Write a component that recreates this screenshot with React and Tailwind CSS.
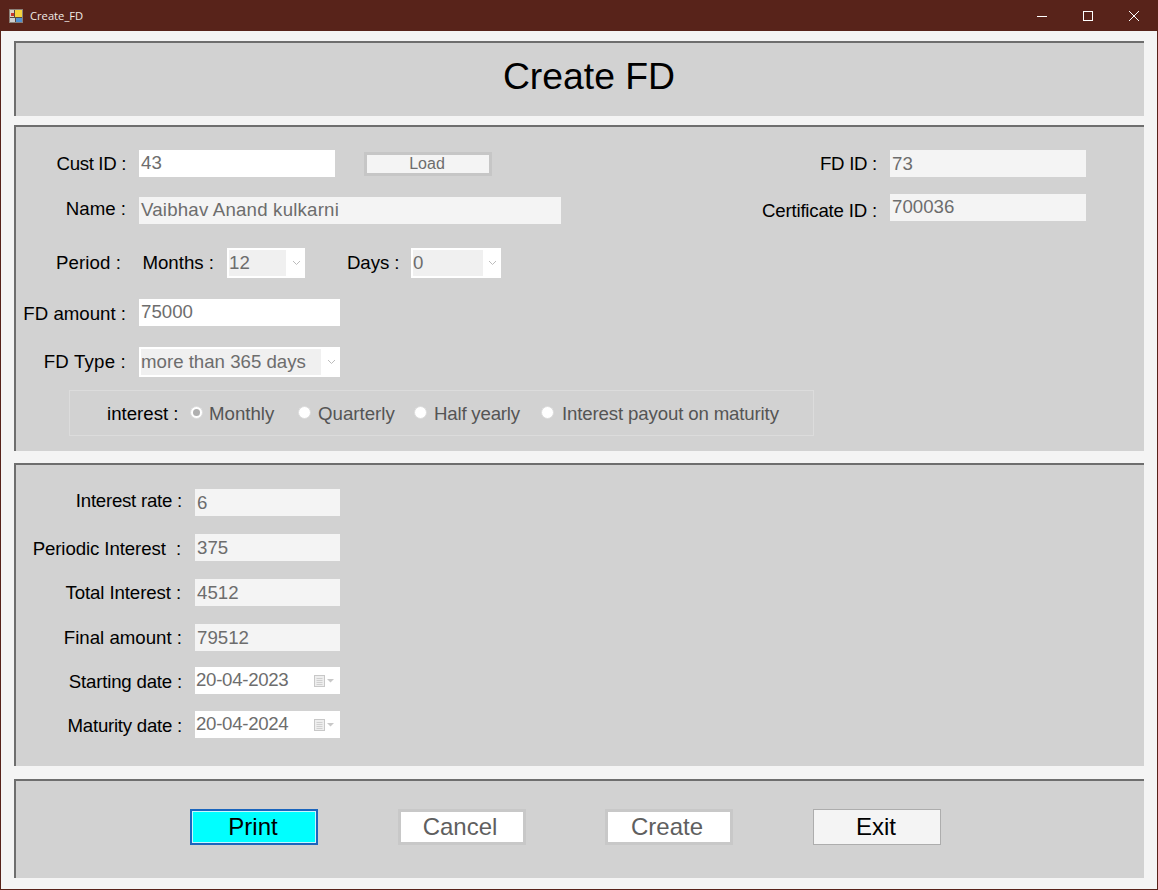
import React from 'react';

const Label = ({ w, className = '', children }) => (
  <div className={`shrink-0 text-right text-black whitespace-pre ${w} ${className}`}>{children}</div>
);

const Field = ({ w, white, className = '', children }) => (
  <div className={`h-[27px] pl-[2px] flex items-center text-[#6d6d6d] ${w} ${white ? 'bg-white' : 'bg-[#f4f4f4]'} ${className}`}>
    {children}
  </div>
);

const Select = ({ w, inner, children }) => (
  <div className={`h-[30px] bg-white flex items-center pl-[2px] ${w}`}>
    <div className={`h-[26px] bg-[#f0f0f0] flex items-center text-[#6d6d6d] whitespace-nowrap ${inner}`}>{children}</div>
    <svg className="ml-auto mr-[4px]" width="9" height="6" viewBox="0 0 9 6" fill="none">
      <path d="M1 1l3.5 3.5L8 1" stroke="#bcbcbc" strokeWidth="1" />
    </svg>
  </div>
);

const DateField = ({ children }) => (
  <div className="h-[27px] w-[145px] bg-white flex items-center pl-[1px] text-[#6d6d6d] tracking-[-0.3px]">
    {children}
    <svg className="ml-auto mr-[4px]" width="22" height="12" viewBox="0 0 22 12">
      <rect x="0.5" y="0.5" width="10" height="11" fill="#eeeeee" stroke="#c8c8c8" />
      <path d="M2.5 3.5h6M2.5 5.5h6M2.5 7.5h6M2.5 9.5h6" stroke="#d0d0d0" />
      <path d="M13 4h7l-3.5 3.5z" fill="#c8c8c8" />
    </svg>
  </div>
);

const Radio = ({ w, checked, className = '', children }) => (
  <div className={`flex items-center shrink-0 whitespace-nowrap text-[#555555] ${w} ${className}`}>
    <div className="w-[13px] h-[13px] rounded-full bg-white border border-[#dcdcdc] flex items-center justify-center">
      {checked && <div className="w-[7px] h-[7px] rounded-full bg-[#b0b0b0]" />}
    </div>
    <span className="pt-[3px]">{children}</span>
  </div>
);

const ResultRow = ({ label, value, className = '', labelClass = '' }) => (
  <div className={`flex items-center ${className}`}>
    <Label w="w-[166px]" className={labelClass}>{label}</Label>
    <Field w="w-[145px] ml-[13px]" className="pt-[1px]">{value}</Field>
  </div>
);

const Panel = ({ className = '', children }) => (
  <div className={`border-t-2 border-l-2 border-[#6e6e6e] bg-[#d2d2d2] ${className}`}>{children}</div>
);

const App = () => {
  return (
    <div className="w-[1158px] h-[890px] flex flex-col overflow-hidden bg-[#58231a] font-['Liberation_Sans',Arial,sans-serif] text-[18.67px] leading-none">
      {/* title bar */}
      <div className="h-[31px] shrink-0 flex items-center text-white">
        <svg className="ml-[9px]" width="14" height="14" viewBox="0 0 14 14">
          <rect x="0.5" y="0.5" width="13" height="13" fill="#5a4a40" stroke="#8a8078" />
          <rect x="6" y="1" width="7" height="7" fill="#f5d33c" />
          <rect x="1" y="1" width="4" height="7" fill="#d9d0c4" />
          <rect x="2" y="4" width="3" height="3" fill="#c8352a" />
          <rect x="7" y="9" width="6" height="4" fill="#4f8fd0" />
          <rect x="1" y="9" width="5" height="4" fill="#cfcfcf" />
        </svg>
        <span className="ml-[7px] text-[11.2px] font-['Open_Sans',sans-serif] text-[#f2ece8]">Create_FD</span>
        <div className="ml-auto flex items-center">
          <svg width="12" height="12" viewBox="0 0 12 12" className="mr-[34px]">
            <path d="M1 6.5h10" stroke="#fff" />
          </svg>
          <svg width="12" height="12" viewBox="0 0 12 12" className="mr-[34px]">
            <rect x="1.5" y="1.5" width="9" height="9" fill="none" stroke="#fff" />
          </svg>
          <svg width="12" height="12" viewBox="0 0 12 12" className="mr-[18px]">
            <path d="M1 1l10 10M11 1L1 11" stroke="#fff" />
          </svg>
        </div>
      </div>

      {/* client area */}
      <div className="mx-px mb-px flex-1 bg-[#f4f4f4] pl-[13px] pr-[13px] pt-[10px]">
        <Panel className="h-[75px] flex items-center justify-center">
          <h1 className="text-[37.33px] font-normal text-black pl-[18px] pb-[5px]">Create FD</h1>
        </Panel>

        <Panel className="h-[326px] mt-[9px] pt-[23px]">
          <div className="flex justify-between items-start pr-[58px]">
            <div>
              <div className="flex items-center">
                <Label w="w-[110px]" className="pt-[2px] tracking-[-0.35px]">Cust ID :</Label>
                <Field white w="w-[196px] ml-[13px]">43</Field>
                <div className="ml-[29px] w-[128px] h-[24px] border-[3px] border-[#c6c6c6] bg-[#f4f4f4] text-[16px] text-[#6d6d6d] flex items-center justify-center pr-[2px]">
                  Load
                </div>
              </div>
              <div className="flex items-center mt-[20px]">
                <Label w="w-[110px]" className="pb-[3px]">Name :</Label>
                <Field w="w-[422px] ml-[13px]" className="tracking-[0.2px]">Vaibhav Anand kulkarni</Field>
              </div>
            </div>
            <div>
              <div className="flex items-center">
                <Label w="w-[120px]" className="pt-[2px] tracking-[-0.3px]">FD ID :</Label>
                <Field w="w-[196px] ml-[13px]" className="pt-[1px]">73</Field>
              </div>
              <div className="flex items-center mt-[17px]">
                <Label w="w-[120px]" className="pt-[8px] tracking-[-0.2px]">Certificate ID :</Label>
                <Field w="w-[196px] ml-[13px]" className="pb-[1px]">700036</Field>
              </div>
            </div>
          </div>

          <div className="flex items-center mt-[24px]">
            <Label w="w-[105px]" className="tracking-[0.1px]">Period :</Label>
            <Label w="w-[72px] ml-[21px]">Months :</Label>
            <div className="ml-[13px]"><Select w="w-[78px]" inner="w-[57px]">12</Select></div>
            <Label w="w-[51px] ml-[42px]" className="tracking-[-0.1px]">Days :</Label>
            <div className="ml-[13px]"><Select w="w-[90px]" inner="w-[70px]">0</Select></div>
          </div>

          <div className="flex items-center mt-[21px]">
            <Label w="w-[110px]" className="pt-[3px]">FD amount :</Label>
            <Field white w="w-[201px] ml-[13px]">75000</Field>
          </div>

          <div className="flex items-center mt-[21px]">
            <Label w="w-[110px]" className="tracking-[0.2px]">FD Type :</Label>
            <div className="ml-[13px]"><Select w="w-[201px]" inner="w-[180px]">more than 365 days</Select></div>
          </div>

          <div className="ml-[53px] mt-[13px] w-[745px] h-[46px] border border-[#dcdcdc] flex items-center">
            <Label w="w-[70px] ml-[37px]" className="pt-[3px]">interest :</Label>
            <div className="ml-[13px] flex">
              <Radio w="w-[108px]" checked className="gap-[6px]">Monthly</Radio>
              <Radio w="w-[116px]" className="gap-[7px]">Quarterly</Radio>
              <Radio w="w-[127px]" className="gap-[7px] tracking-[-0.2px]">Half yearly</Radio>
              <Radio w="w-[245px]" className="gap-[8px] tracking-[-0.15px]">Interest payout on maturity</Radio>
            </div>
          </div>
        </Panel>

        <Panel className="h-[303px] mt-[12px] pt-[24px]">
          <ResultRow label="Interest rate :" value="6" labelClass="pb-[3px] tracking-[-0.25px]" />
          <ResultRow label="Periodic Interest  :" value="375" className="mt-[18px]" labelClass="pt-[3px] pr-[1px] tracking-[-0.1px]" />
          <ResultRow label="Total Interest :" value="4512" className="mt-[18px]" labelClass="pt-[1px] pr-[1px] tracking-[-0.1px]" />
          <ResultRow label="Final amount :" value="79512" className="mt-[18px]" labelClass="pt-[1px]" />
          <div className="flex items-center mt-[16px]">
            <Label w="w-[166px]" className="pt-[4px] tracking-[-0.2px]">Starting date :</Label>
            <div className="ml-[13px]"><DateField>20-04-2023</DateField></div>
          </div>
          <div className="flex items-center mt-[17px]">
            <Label w="w-[166px]" className="pt-[4px] tracking-[-0.25px]">Maturity date :</Label>
            <div className="ml-[13px]"><DateField>20-04-2024</DateField></div>
          </div>
        </Panel>

        <Panel className="h-[99px] mt-[13px] pt-[28px] pl-[174px] flex items-start text-[24px]">
          <div className="w-[128px] h-[36px] border-2 border-[#1b65bd] bg-[#00ffff] shadow-[inset_0_0_0_1px_#c8f4ff] text-black flex items-center justify-center pr-[2px]">Print</div>
          <div className="ml-[80px] w-[128px] h-[36px] border-[3px] border-[#c8c8c8] bg-white text-[#5f5f5f] flex items-center justify-center pr-[4px]">Cancel</div>
          <div className="ml-[79px] w-[128px] h-[36px] border-[3px] border-[#c8c8c8] bg-white text-[#5f5f5f] flex items-center justify-center pr-[4px]">Create</div>
          <div className="ml-[80px] w-[128px] h-[36px] border border-[#adadad] bg-[#f4f4f4] text-black flex items-center justify-center pr-[2px]">Exit</div>
        </Panel>
      </div>
    </div>
  );
};

export default App;
